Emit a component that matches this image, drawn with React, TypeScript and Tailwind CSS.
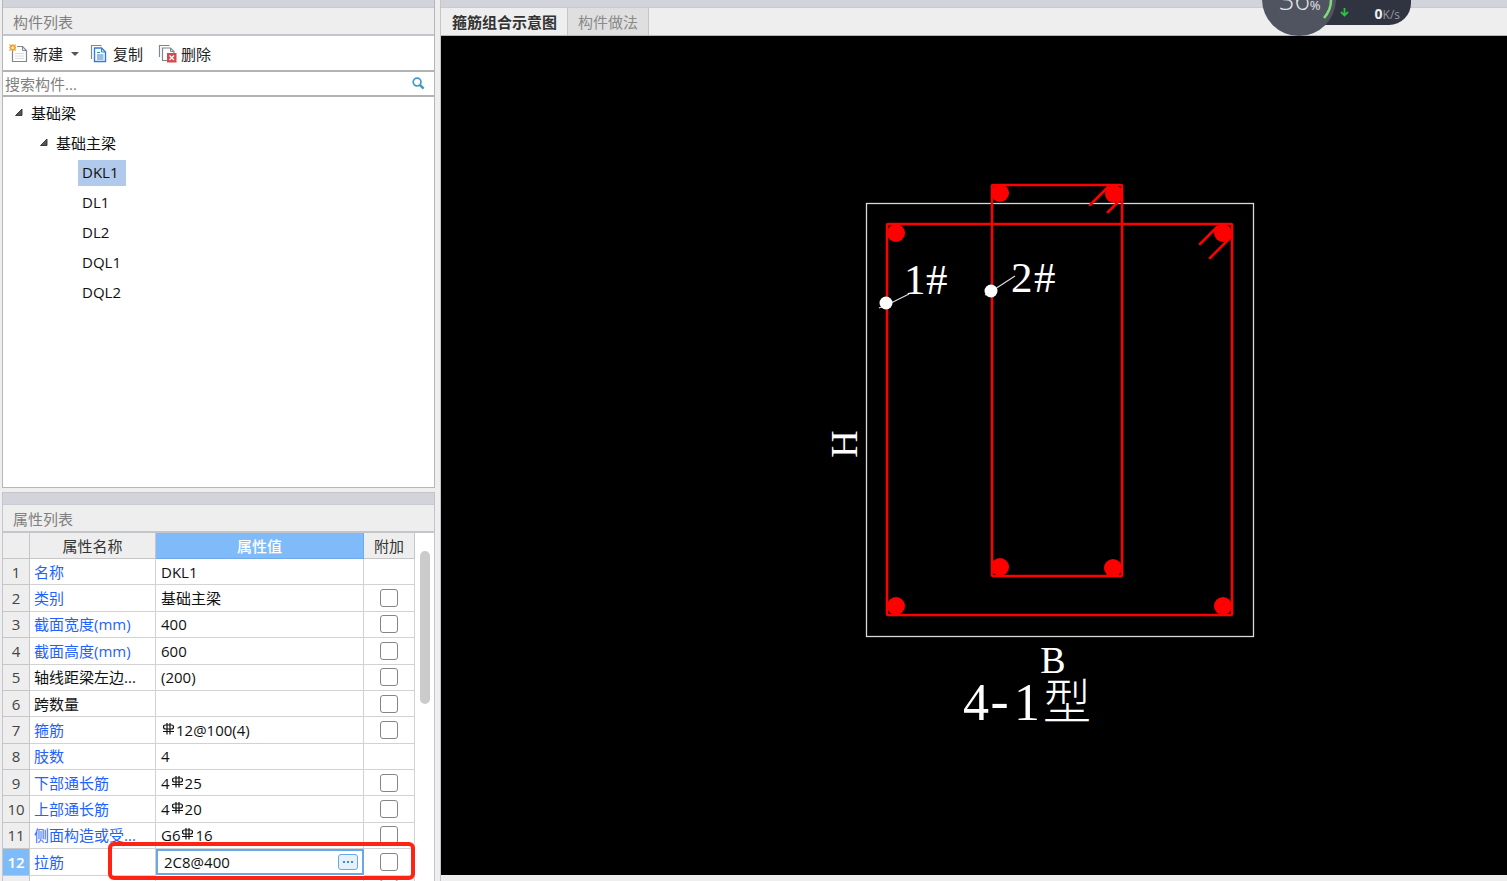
import React, { useState } from 'react';
import clsx from 'clsx';

interface Property {
  name: string;
  value: string;
  linked?: boolean;
  extra?: boolean;
}

const MEMBERS = ['DKL1', 'DL1', 'DL2', 'DQL1', 'DQL2'];

// "C" in a value stands for the HRB400 rebar grade sign
const PROPERTIES: Property[] = [
  { name: '名称', value: 'DKL1', linked: true },
  { name: '类别', value: '基础主梁', linked: true, extra: true },
  { name: '截面宽度(mm)', value: '400', linked: true, extra: true },
  { name: '截面高度(mm)', value: '600', linked: true, extra: true },
  { name: '轴线距梁左边...', value: '(200)', extra: true },
  { name: '跨数量', value: '', extra: true },
  { name: '箍筋', value: 'C12@100(4)', linked: true, extra: true },
  { name: '肢数', value: '4', linked: true },
  { name: '下部通长筋', value: '4C25', linked: true, extra: true },
  { name: '上部通长筋', value: '4C20', linked: true, extra: true },
  { name: '侧面构造或受...', value: 'G6C16', linked: true, extra: true },
];

function RebarSign() {
  return (
    <svg
      width="15"
      height="13"
      viewBox="0 0 15 13"
      fill="none"
      stroke="#111"
      strokeWidth="1.2"
      className="inline-block align-baseline"
      role="img"
      aria-label="HRB400"
    >
      <path d="M6 0v11.500M9 0v11.500M2 8.500h11" />
      <path d="M4.500 2h6q2 0 2 2t-2 2h-6q-2 0-2-2t2-2z" />
    </svg>
  );
}

function Value({ text }: { text: string }) {
  const parts = text.split('C');
  if (parts.length < 2) return <>{text}</>;
  return (
    <>
      {parts[0]}
      <RebarSign />
      {parts[1]}
    </>
  );
}

function NewIcon() {
  return (
    <svg width="19" height="19" viewBox="0 0 19 19" fill="none">
      <path d="M3.5 6v11.5h14v-11l-4-4H8" fill="#fff" stroke="#7f8890" strokeWidth="1.2" />
      <path d="M13.5 2.5v4h4" stroke="#7f8890" />
      <path d="M6 9.5h9M6 12h9M6 14.5h9" stroke="#d8dcdf" />
      <path d="M0 0l2.3 1L4 0l1 1L7 .3 6.5 2.5 7.5 4 6.3 5 7 7 5 6.3 3.8 7.5 2.5 6.3 0 7l1-2.3L0 3.5l1-1z" fill="#f3a233" />
      <circle cx="3.7" cy="3.7" r="1.3" fill="#fff0cf" />
    </svg>
  );
}

function CopyIcon() {
  return (
    <svg width="17" height="19" viewBox="0 0 17 19" fill="none">
      <path d="M1.5 15V1.5h10" stroke="#7f8890" strokeWidth="1.2" />
      <path d="M4.5 4h7l4 4v9.5h-11z" fill="#fff" stroke="#2f7fd6" strokeWidth="1.4" />
      <path d="M11.5 4v4h4" stroke="#2f7fd6" />
      <path d="M7 8.5h3M7 11h6.5M7 13h6.5M7 15h6.5" stroke="#2f7fd6" />
    </svg>
  );
}

function DeleteIcon() {
  return (
    <svg width="19" height="19" viewBox="0 0 19 19" fill="none">
      <path d="M1.5 13V1.5h10" stroke="#7f8890" strokeWidth="1.2" />
      <path d="M9 16.5H4.5V4h8L16 7.5V9" stroke="#7f8890" strokeWidth="1.2" />
      <path d="M12.5 4v3.5H16" stroke="#7f8890" />
      <rect x="9" y="9" width="9.5" height="9.5" fill="#d64a4d" />
      <path d="M11.5 11.5L16 16M16 11.5L11.5 16" stroke="#fff" strokeWidth="1.3" />
    </svg>
  );
}

function SearchIcon() {
  return (
    <svg width="13" height="13" viewBox="0 0 14 14" fill="none" stroke="#3f97c9">
      <circle cx="5.5" cy="5.5" r="4.2" strokeWidth="1.8" />
      <path d="M8.5 8.5l4 4" strokeWidth="2.6" />
    </svg>
  );
}

function Expander() {
  return (
    <svg width="8" height="8" viewBox="0 0 8 8">
      <path d="M7 1v6.500H.5z" fill="#555" stroke="#222" strokeWidth=".8" />
    </svg>
  );
}

function PanelTitle({ children }: { children: React.ReactNode }) {
  return (
    <h2 className="flex h-7 shrink-0 items-center border-b-2 border-[#c3c5ca] bg-[#eee] pt-px pl-[10px] text-[#808080]">
      {children}
    </h2>
  );
}

function MemberPanel() {
  const [selected, setSelected] = useState('DKL1');
  return (
    <section className="flex h-[488px] shrink-0 flex-col border-x border-b border-[#b5b6ba] bg-white">
      <div className="h-2 shrink-0 border-b border-[#c8cad1] bg-[#d3d4db]" />
      <PanelTitle>构件列表</PanelTitle>
      <div className="flex h-[34px] shrink-0 items-center pt-px text-[#222]">
        <button type="button" className="flex items-center gap-[5px] pl-[6px]">
          <NewIcon />
          新建
          <span className="ml-[3px] border-x-4 border-t-4 border-x-transparent border-t-[#555]" />
        </button>
        <button type="button" className="flex items-center gap-[6px] pl-[11px]">
          <CopyIcon />
          复制
        </button>
        <button type="button" className="flex items-center gap-1 pl-[15px]">
          <DeleteIcon />
          删除
        </button>
      </div>
      <label className="flex h-[27px] shrink-0 items-center border-y-2 border-[#b1b2b4] pr-[9px]">
        <input
          type="search"
          aria-label="搜索构件"
          placeholder="搜索构件..."
          className="min-w-0 flex-1 pl-[2px] outline-none placeholder:text-[#808080]"
        />
        <SearchIcon />
      </label>
      <div className="text-[#111]">
        <div className="flex h-[30px] items-center gap-2 pl-3">
          <Expander />
          <span className="pt-px">基础梁</span>
        </div>
        <div className="flex h-[30px] items-center gap-2 pl-[37px]">
          <Expander />
          <span className="pt-px">基础主梁</span>
        </div>
        <ul>
          {MEMBERS.map((member) => (
            <li key={member} className="flex h-[30px] items-center pt-px pl-[75px]">
              <button
                type="button"
                onClick={() => setSelected(member)}
                className={clsx('h-[26px] pr-2 pb-[2px] pl-1', member === selected && 'bg-[#b1caec]')}
              >
                {member}
              </button>
            </li>
          ))}
        </ul>
      </div>
    </section>
  );
}

function ExtraCheck({ name }: { name: string }) {
  return (
    <input
      type="checkbox"
      aria-label={`附加 ${name}`}
      className="mx-auto block size-[18px] appearance-none rounded-[3px] border border-[#858585] bg-white checked:bg-[#80bbf9]"
    />
  );
}

const cell = 'h-[26px] border-r border-b border-[#d2d2d2] p-0';
const rowHead = 'h-[26px] border-r border-b border-[#c6c6c6] p-0 text-center font-normal';

function PropertyPanel() {
  return (
    <section className="mt-[4px] flex min-h-0 flex-1 flex-col overflow-hidden border-x border-t border-[#c3c5ca] bg-white">
      <div className="h-3 shrink-0 border-b border-[#c8cad1] bg-[#d3d4db]" />
      <PanelTitle>属性列表</PanelTitle>
      <div className="relative flex">
        <div className="min-w-0 flex-1">
          <table className="h-[369px] w-full table-fixed border-separate border-spacing-0 whitespace-nowrap text-[#111]">
            <colgroup>
              <col className="w-[27px]" />
              <col className="w-[126px]" />
              <col />
              <col className="w-[51px]" />
            </colgroup>
            <thead>
              <tr className="bg-[#eee] text-[#333]">
                <th className={rowHead} aria-label="序号" />
                <th className={rowHead}>属性名称</th>
                <th className="h-[26px] border-r border-b border-[#6fa9e6] bg-[#80bbf9] p-0 font-medium text-white">
                  属性值
                </th>
                <th className={rowHead}>附加</th>
              </tr>
            </thead>
            <tbody>
              {PROPERTIES.map((property, index) => (
                <tr key={property.name}>
                  <th className={clsx(rowHead, 'bg-[#eee] text-[#444]')}>{index + 1}</th>
                  <td className={clsx(cell, 'pl-1', property.linked && 'text-[#1f62ff]')}>{property.name}</td>
                  <td className={clsx(cell, 'pl-[5px]')}>
                    <Value text={property.value} />
                  </td>
                  <td className={cell}>{property.extra && <ExtraCheck name={property.name} />}</td>
                </tr>
              ))}
              <tr>
                <th className={clsx(rowHead, 'bg-[#80bbf9] font-semibold text-white')}>12</th>
                <td className={clsx(cell, 'pl-1 text-[#1f62ff]')}>拉筋</td>
                <td className="h-[26px] p-0">
                  <div className="flex h-[26px] items-center border-2 border-[#69a8e6] pr-1 pl-[6px]">
                    <input
                      type="text"
                      aria-label="拉筋"
                      defaultValue="2C8@400"
                      className="h-5 min-w-0 flex-1 outline-none"
                    />
                    <button
                      type="button"
                      aria-label="更多"
                      className="flex h-4 w-5 items-center justify-center gap-[2px] rounded-[3px] border border-[#69a8e6] bg-[#e6f1fc]"
                    >
                      <span className="size-[2px] bg-[#3d8bd4]" />
                      <span className="size-[2px] bg-[#3d8bd4]" />
                      <span className="size-[2px] bg-[#3d8bd4]" />
                    </button>
                  </div>
                </td>
                <td className={cell}>
                  <ExtraCheck name="拉筋" />
                </td>
              </tr>
              <tr>
                <th className={clsx(rowHead, 'bg-[#eee]')} aria-label="13" />
                <td className={cell} />
                <td className={cell} />
                <td className={cell}>
                  <ExtraCheck name="13" />
                </td>
              </tr>
            </tbody>
          </table>
        </div>
        <div className="w-[19px] shrink-0 pt-[18px] pl-[5px]">
          <div className="h-[153px] w-[10px] rounded-full bg-[#cbcbcb]" />
        </div>
        {/* Callout around the tie bar row */}
        <div className="pointer-events-none absolute top-[309px] right-[19px] left-[105px] h-[38px] rounded-[6px] border-4 border-[#ff2314]" />
      </div>
    </section>
  );
}

const BARS = [
  [1000, 193],
  [1114, 194],
  [896, 233],
  [1223, 233],
  [1000, 567],
  [1113, 568],
  [896, 606],
  [1223, 606],
];

function SectionDrawing() {
  return (
    <svg
      viewBox="441 36 1066 839"
      className="h-full w-full font-['Liberation_Serif','Noto_Sans_CJK_SC',serif]"
      fill="none"
      role="img"
      aria-label="箍筋组合示意图"
    >
      <rect x="866.5" y="203.5" width="387" height="433" stroke="#d8d8d8" strokeWidth="1.3" />
      <g stroke="#f00" strokeWidth="2.5" strokeLinecap="round">
        <rect x="887" y="224" width="345" height="391" rx="1" />
        <rect x="992" y="185" width="130" height="391" rx="1" />
        <path d="M1108 187l-18 18M1120 200l-12 12M1217 227l-17 17M1230 238l-20 20" />
      </g>
      {BARS.map(([x, y]) => (
        <circle key={`${x}-${y}`} cx={x} cy={y} r="9" fill="#f00" />
      ))}
      <path d="M879 308l12-5 18-9M985 295l10-6 20-13" stroke="#ddd" strokeWidth="1.2" />
      <circle cx="886" cy="303" r="6.5" fill="#fff" />
      <circle cx="991" cy="291" r="6.5" fill="#fff" />
      <g fill="#fff">
        <text x="904 926" y="294" fontSize="43">
          1#
        </text>
        <text x="1011 1034" y="292" fontSize="43">
          2#
        </text>
        <text x="1053" y="673" fontSize="38" textAnchor="middle">
          B
        </text>
        <text transform="translate(857 444) rotate(-90)" fontSize="38" textAnchor="middle">
          H
        </text>
        <text x="963" y="720" fontSize="52">
          4
        </text>
        <text x="984" y="720" fontSize="52" fontFamily="Liberation Mono, monospace">
          -
        </text>
        <text x="1014" y="720" fontSize="52">
          1
        </text>
        <text x="1043" y="719" fontSize="48" fontWeight="300">
          型
        </text>
      </g>
    </svg>
  );
}

function SpeedBadge() {
  return (
    <div className="absolute top-0 right-[96px] h-[37px] w-[149px] overflow-hidden font-['Open_Sans',sans-serif]">
      <div className="absolute top-0 right-0 flex h-[25px] w-[110px] items-center justify-between rounded-br-[22px] bg-[#303340] pr-[11px] pl-[39px]">
        <svg width="9" height="9" viewBox="0 0 9 9" fill="none" stroke="#2bc241" strokeWidth="1.8">
          <path d="M4.5 0v7M1 4l3.5 3.5L8 4" />
        </svg>
        <span className="pt-[2px] text-[14px] leading-none font-bold text-[#eee]">
          0<span className="text-[12px] font-normal text-[#9698a1]">K/s</span>
        </span>
      </div>
      <div className="absolute -top-[38px] left-0 size-[74px] rounded-full bg-[#505461]">
        <svg width="74" height="74" viewBox="0 0 74 74" fill="none" className="absolute inset-0">
          <path d="M69 38q0 10-7 18" stroke="#83db78" strokeWidth="2.5" />
        </svg>
        <span className="absolute top-[24px] left-[17px] text-[27px] leading-none font-light whitespace-nowrap text-[#e3e4e8]">
          36<span className="text-[13px] font-normal">%</span>
        </span>
      </div>
    </div>
  );
}

function DiagramPanel() {
  return (
    <main className="flex min-w-0 flex-1 flex-col border-l border-[#c3c5ca]">
      <div className="h-2 shrink-0 border-b border-[#c8cad1] bg-[#d3d4db]" />
      <div role="tablist" className="flex h-7 shrink-0 border-b border-[#b5b6ba] bg-[#eee]">
        <button
          type="button"
          role="tab"
          aria-selected="true"
          className="border-r border-[#c3c5ca] pr-[10px] pl-[11px] font-bold text-[#333]"
        >
          箍筋组合示意图
        </button>
        <button
          type="button"
          role="tab"
          aria-selected="false"
          className="border-r border-[#c3c5ca] bg-[#dfdfdf] px-[10px] text-[#8a8a8a]"
        >
          构件做法
        </button>
      </div>
      <div className="mb-[6px] min-h-0 flex-1 bg-black">
        <SectionDrawing />
      </div>
    </main>
  );
}

export default function App() {
  return (
    <div className="relative flex h-screen gap-[5px] overflow-hidden bg-[#eee] pl-[2px] font-['Open_Sans','Noto_Sans_CJK_SC',sans-serif] text-[15px] leading-5">
      <div className="flex w-[433px] shrink-0 flex-col">
        <MemberPanel />
        <PropertyPanel />
      </div>
      <DiagramPanel />
      <SpeedBadge />
    </div>
  );
}
